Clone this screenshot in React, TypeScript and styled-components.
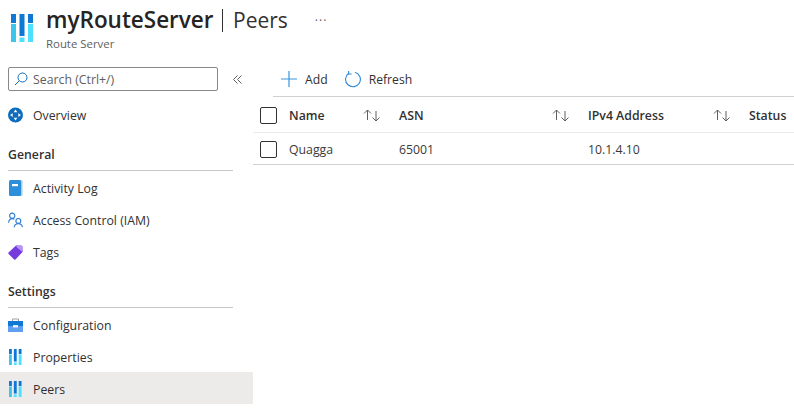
import { createGlobalStyle } from 'styled-components'
import styled from 'styled-components'

const GlobalStyle = createGlobalStyle`
  html, body {
    margin: 0;
    height: 409px;
    overflow: hidden;
    background: #fff;
    font-family: "Open Sans", "Liberation Sans", sans-serif;
    color: #323130;
  }
`

const Page = styled.div`
  width: 794px;
  height: 409px;
  overflow: hidden;
`

const Header = styled.header`
  height: 67px;
  display: flex;
  padding: 14px 0 0 11px;
  box-sizing: border-box;
`

const TitleBlock = styled.div`
  margin-left: 13px;
  margin-top: -8px;
`

const TitleRow = styled.div`
  display: flex;
  align-items: center;
  height: 28px;
`

const Title = styled.h1`
  margin: 0;
  font-size: 22.5px;
  line-height: 28px;
  font-weight: 600;
  color: #252423;
  white-space: nowrap;
`

const Divider = styled.span`
  width: 1.5px;
  height: 23px;
  margin: 1px 10px 0 8px;
  background: #323130;
`

const Blade = styled.span`
  font-size: 21px;
  line-height: 28px;
  color: #323130;
`

const More = styled.span`
  margin-left: 27px;
  font-size: 12px;
  letter-spacing: 1px;
  color: #605e5c;
`

const Subtitle = styled.div`
  font-size: 11.4px;
  line-height: 16px;
  margin-top: 2px;
  color: #605e5c;
`

const Body = styled.div`
  display: flex;
`

const Sidebar = styled.nav`
  width: 253px;
  flex: none;
`

const SearchRow = styled.div`
  display: flex;
  align-items: center;
  padding-left: 8px;
  height: 24px;
  margin-bottom: 7px;
`

const SearchBox = styled.div`
  width: 210px;
  height: 24px;
  box-sizing: border-box;
  border: 1px solid #8a8886;
  border-radius: 2px;
  display: flex;
  align-items: center;
  gap: 5px;
  padding-left: 5px;
  font-size: 12.3px;
  color: #605e5c;
`

const Collapse = styled.span`
  margin-left: 15px;
  display: flex;
`

const Item = styled.div<{ $active?: boolean }>`
  height: 32px;
  box-sizing: border-box;
  padding: 2px 0 0 8px;
  display: flex;
  align-items: center;
  gap: 10px;
  font-size: 12.3px;
  background: ${p => (p.$active ? '#edebe9' : 'transparent')};
`

const IconSlot = styled.span`
  width: 15px;
  height: 16px;
  display: flex;
  align-items: center;
  justify-content: center;
`

const Section = styled.div`
  margin: 9px 20px 0 8px;
  height: 32px;
  box-sizing: border-box;
  padding-top: 7px;
  border-bottom: 1px solid #c8c6c4;
  font-size: 12.3px;
  font-weight: 600;
  color: #323130;
`

const Main = styled.main`
  flex: 1;
  min-width: 0;
`

const Toolbar = styled.div`
  margin-left: 20px;
  height: 30px;
  box-sizing: border-box;
  border-bottom: 1px solid #d2d0ce;
  display: flex;
  align-items: flex-start;
  padding-left: 8px;
  font-size: 12.2px;
`

const ToolButton = styled.div`
  display: flex;
  align-items: center;
  gap: 8px;
  height: 24px;
  margin-right: 17px;
`

const Row = styled.div<{ $header?: boolean }>`
  display: grid;
  grid-template-columns: 36px 110px 189px 161px 1fr;
  align-items: center;
  height: ${p => (p.$header ? '36px' : '32px')};
  box-sizing: border-box;
  padding-top: ${p => (p.$header ? '1px' : '2px')};
  font-size: 12.3px;
  font-weight: ${p => (p.$header ? 600 : 400)};
  border-bottom: 1px solid ${p => (p.$header ? '#edebe9' : '#d2d0ce')};
  color: ${p => (p.$header ? '#323130' : '#3b3a39')};
`

const CheckCell = styled.div`
  padding-left: 7px;
  display: flex;
`

const Checkbox = styled.span`
  width: 17px;
  height: 17px;
  box-sizing: border-box;
  border: 1px solid #323130;
  border-radius: 2px;
`

const HeadCell = styled.div`
  display: flex;
  align-items: center;
  justify-content: space-between;
  padding-right: 18px;
  white-space: nowrap;
`

const RouteIcon = ({ size = 16 }: { size?: number }) => (
  <svg width={(size * 22) / 28} height={size} viewBox="0 0 22 28">
    <rect x="0" y="0" width="5" height="9" fill="#0f78d4" />
    <rect x="0" y="10" width="5" height="18" fill="#3cc6ea" />
    <rect x="8.500" y="0" width="5" height="22" fill="#0f78d4" />
    <rect x="8.500" y="23.500" width="5" height="4.500" fill="#50e0ff" />
    <rect x="17" y="0" width="5" height="9" fill="#0f78d4" />
    <rect x="17" y="10" width="5" height="18" fill="#50e0ff" />
  </svg>
)

const OverviewIcon = () => (
  <svg width="16" height="16" viewBox="0 0 16 16">
    <circle cx="8" cy="8" r="8" fill="#0f6cbd" />
    <g fill="#fff">
      <path d="M8 2.200 10 5H6z" />
      <path d="M8 13.800 6 11h4z" />
      <path d="M2.200 8 5 6v4z" />
      <path d="M13.800 8 11 10V6z" />
    </g>
  </svg>
)

const LogIcon = () => (
  <svg width="14" height="16" viewBox="0 0 14 16">
    <rect x="0.500" y="0" width="13" height="16" rx="1.500" fill="#a3cdf0" />
    <rect x="0" y="0" width="12" height="16" rx="1.500" fill="#2c8fdc" />
    <rect x="3" y="4" width="6" height="2.200" fill="#fff" />
  </svg>
)

const AccessIcon = () => (
  <svg width="16" height="16" viewBox="0 0 16 16" fill="none" stroke="#2b7cd3" strokeWidth="1.200">
    <circle cx="4.500" cy="3.500" r="2.800" />
    <path d="M.6 11c.3-2.800 1.800-4.500 3.900-4.500 1 0 1.700.2 2.300.7" />
    <circle cx="11" cy="9" r="2.600" />
    <path d="M6.600 15.800c.2-2.300 2-3.800 4.400-3.800s4.200 1.500 4.400 3.800" />
  </svg>
)

const TagIcon = () => (
  <svg width="15" height="15" viewBox="0 0 15 15">
    <path d="M8 .5h5a1.500 1.500 0 0 1 1.500 1.500v5L7.500 14.500a1 1 0 0 1-1.400 0L.6 9a1 1 0 0 1 0-1.400z" fill="#773adc" />
    <path d="M8 .5h5a1.500 1.500 0 0 1 1.500 1.500v5L9 2.500z" fill="#b796f9" />
  </svg>
)

const ConfigIcon = () => (
  <svg width="15" height="14" viewBox="0 0 15 14">
    <path d="M4.500 3V1h6v2" fill="none" stroke="#a19f9d" strokeWidth="1" />
    <rect x="0" y="3" width="15" height="11" fill="#5ea0ef" />
    <rect x="0" y="3" width="15" height="5" fill="#0f78d4" />
    <rect x="5" y="7" width="5" height="2.500" fill="#fff" opacity="0.85" />
  </svg>
)

const SearchIcon = () => (
  <svg width="14" height="14" viewBox="0 0 14 14" fill="none" stroke="#0f6cbd" strokeWidth="1">
    <circle cx="8.500" cy="5.500" r="4.500" />
    <path d="M5.300 8.700 1 13" />
  </svg>
)

const CollapseIcon = () => (
  <svg width="9" height="9" viewBox="0 0 9 9" fill="none" stroke="#605e5c" strokeWidth="1">
    <path d="M4.500.5.500 4.500l4 4M8.500.5l-4 4 4 4" />
  </svg>
)

const PlusIcon = () => (
  <svg width="16" height="16" viewBox="0 0 16 16" stroke="#3a96dd" strokeWidth="1.200">
    <path d="M8 0v16M0 8h16" />
  </svg>
)

const RefreshIcon = () => (
  <svg width="16" height="17" viewBox="0 0 16 17" fill="none" stroke="#2b88d8" strokeWidth="1.100">
    <path d="M10 1.200A7.400 7.400 0 1 1 3.800 2.200" />
    <path d="M3.600 0v3h3" />
  </svg>
)

const SortIcon = () => (
  <svg width="18" height="13" viewBox="0 0 18 13" fill="none" stroke="#605e5c" strokeWidth="1">
    <path d="M4.500 11V1M1 4.500l3.500-3.500L8 4.500" />
    <path d="M13 2v10M9.500 8.500 13 12l3.500-3.500" />
  </svg>
)

const columns = ['Name', 'ASN', 'IPv4 Address']

export default function App() {
  return (
    <Page>
      <GlobalStyle />
      <Header>
        <RouteIcon size={28} />
        <TitleBlock>
          <TitleRow>
            <Title>myRouteServer</Title>
            <Divider />
            <Blade>Peers</Blade>
            <More>···</More>
          </TitleRow>
          <Subtitle>Route Server</Subtitle>
        </TitleBlock>
      </Header>
      <Body>
        <Sidebar>
          <SearchRow>
            <SearchBox>
              <SearchIcon />
              Search (Ctrl+/)
            </SearchBox>
            <Collapse>
              <CollapseIcon />
            </Collapse>
          </SearchRow>
          <Item>
            <IconSlot><OverviewIcon /></IconSlot>
            Overview
          </Item>
          <Section>General</Section>
          <Item><IconSlot><LogIcon /></IconSlot>Activity Log</Item>
          <Item><IconSlot><AccessIcon /></IconSlot>Access Control (IAM)</Item>
          <Item><IconSlot><TagIcon /></IconSlot>Tags</Item>
          <Section>Settings</Section>
          <Item><IconSlot><ConfigIcon /></IconSlot>Configuration</Item>
          <Item><IconSlot><RouteIcon /></IconSlot>Properties</Item>
          <Item $active><IconSlot><RouteIcon /></IconSlot>Peers</Item>
        </Sidebar>
        <Main>
          <Toolbar>
            <ToolButton><PlusIcon />Add</ToolButton>
            <ToolButton><RefreshIcon />Refresh</ToolButton>
          </Toolbar>
          <Row $header>
            <CheckCell><Checkbox /></CheckCell>
            {columns.map(name => (
              <HeadCell key={name}>
                {name}
                <SortIcon />
              </HeadCell>
            ))}
            <HeadCell>Status</HeadCell>
          </Row>
          <Row>
            <CheckCell><Checkbox /></CheckCell>
            <div>Quagga</div>
            <div>65001</div>
            <div>10.1.4.10</div>
            <div />
          </Row>
        </Main>
      </Body>
    </Page>
  )
}
